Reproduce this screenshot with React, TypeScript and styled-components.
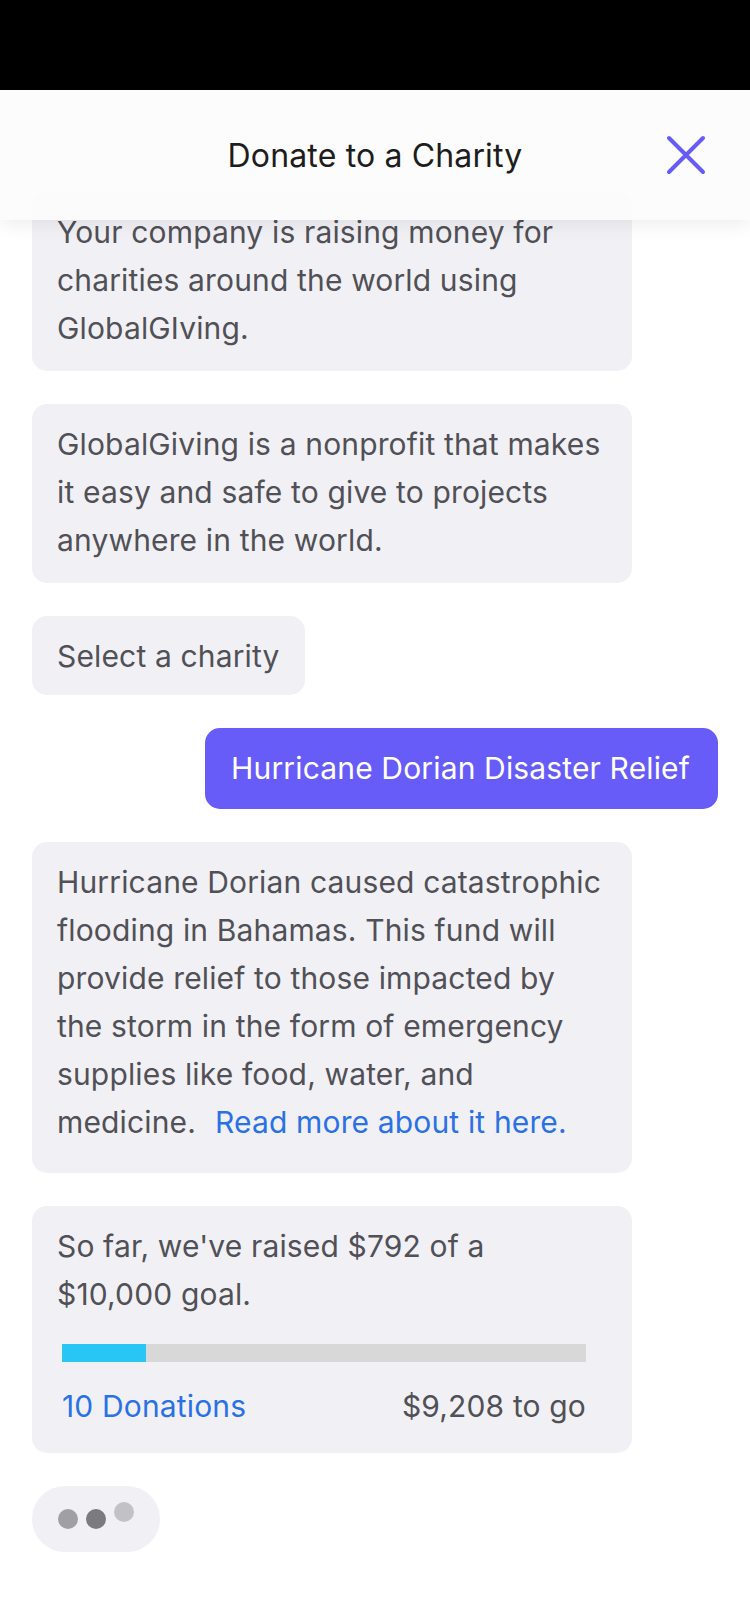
import React from "react";
import styled, { createGlobalStyle } from "styled-components";

const GlobalStyle = createGlobalStyle`
  html, body {
    margin: 0;
    padding: 0;
    background: #ffffff;
  }
  body {
    font-family: Inter, "Noto Sans", "Liberation Sans", sans-serif;
    -webkit-font-smoothing: antialiased;
  }
  * { box-sizing: border-box; }
`;

const Screen = styled.div`
  width: 750px;
  min-height: 1624px;
  background: #ffffff;
  display: flex;
  flex-direction: column;
  overflow: hidden;
`;

const StatusBar = styled.div`
  height: 90px;
  background: #000000;
  flex: none;
`;

const Body = styled.div`
  position: relative;
  flex: 1;
`;

const Header = styled.header`
  position: absolute;
  top: 0;
  left: 0;
  right: 0;
  height: 130px;
  z-index: 2;
  background: rgba(252, 252, 252, 0.93);
  box-shadow: 0 5px 18px rgba(0, 0, 0, 0.07);
  display: grid;
  grid-template-columns: 1fr auto 1fr;
  align-items: center;
`;

const Title = styled.h1`
  grid-column: 2;
  margin: 0;
  font-family: Inter, "Noto Sans", sans-serif;
  font-weight: 400;
  font-size: 32px;
  letter-spacing: 0.15px;
  color: #1d1d20;
`;

const CloseButton = styled.button`
  grid-column: 3;
  justify-self: end;
  margin-right: 44px;
  width: 40px;
  height: 40px;
  padding: 0;
  border: none;
  background: transparent;
  display: flex;
  align-items: center;
  justify-content: center;
  cursor: pointer;
`;

const Chat = styled.div`
  display: flex;
  flex-direction: column;
  gap: 33px;
  padding: 102px 32px 40px;
`;

const Bubble = styled.div<{ $pb?: number }>`
  align-self: flex-start;
  max-width: 600px;
  padding: 16px 25px ${(p) => p.$pb ?? 19}px;
  background: #f1f0f5;
  border-radius: 15px;
  font-size: 30px;
  line-height: 48px;
  letter-spacing: 0.15px;
  color: #505056;
`;

const WideBubble = styled(Bubble)`
  width: 600px;
`;

const UserBubble = styled.div`
  align-self: flex-end;
  padding: 16px 28px 17px 26px;
  background: #675cf8;
  border-radius: 15px;
  font-size: 30px;
  line-height: 48px;
  letter-spacing: 0.15px;
  color: #ffffff;
`;

const Link = styled.a`
  color: #2b71e6;
  text-decoration: none;
  margin-left: 19px;
`;

const Stats = styled.div`
  margin: 26px 21px 0 5px;
  display: flex;
  flex-direction: column;
  gap: 20px;
`;

const Track = styled.div`
  height: 18px;
  background: #d8d8d8;
  display: flex;
`;

const Fill = styled.div`
  height: 100%;
  background: #27c6f4;
`;

const StatsRow = styled.div`
  display: flex;
  justify-content: space-between;
  padding-bottom: 4px;
`;

const BlueText = styled.span`
  color: #2b71e6;
`;

const Typing = styled.div`
  align-self: flex-start;
  width: 128px;
  height: 66px;
  border-radius: 33px;
  background: #f1f0f5;
  display: flex;
  align-items: center;
  justify-content: center;
  gap: 8px;
`;

const Dot = styled.span<{ $color: string; $lift?: number }>`
  width: 20px;
  height: 20px;
  border-radius: 50%;
  background: ${(p) => p.$color};
  transform: translateY(${(p) => -(p.$lift ?? 0)}px);
`;

export default function App() {
  const progress = 16;
  return (
    <>
      <GlobalStyle />
      <Screen>
        <StatusBar />
        <Body>
          <Header>
            <Title>Donate to a Charity</Title>
            <CloseButton aria-label="Close">
              <svg width="40" height="40" viewBox="0 0 40 40">
                <path
                  d="M3 3 L37 37 M37 3 L3 37"
                  stroke="#675cf8"
                  strokeWidth="4"
                  strokeLinecap="round"
                  fill="none"
                />
              </svg>
            </CloseButton>
          </Header>
          <Chat>
            <WideBubble>
              Your company is raising money for charities around the world using
              GlobalGIving.
            </WideBubble>
            <WideBubble>
              GlobalGiving is a nonprofit that makes it easy and safe to give to
              projects anywhere in the world.
            </WideBubble>
            <Bubble $pb={15}>Select a charity</Bubble>
            <UserBubble>Hurricane Dorian Disaster Relief</UserBubble>
            <WideBubble $pb={27}>
              Hurricane Dorian caused catastrophic flooding in Bahamas. This fund
              will provide relief to those impacted by the storm in the form of
              emergency supplies like food, water, and medicine.
              <Link href="#">Read more about it here.</Link>
            </WideBubble>
            <WideBubble $pb={19}>
              So far, we've raised $792 of a $10,000 goal.
              <Stats>
                <Track>
                  <Fill style={{ width: `${progress}%` }} />
                </Track>
                <StatsRow>
                  <BlueText>10 Donations</BlueText>
                  <span>$9,208 to go</span>
                </StatsRow>
              </Stats>
            </WideBubble>
            <Typing>
              <Dot $color="#a0a0a3" />
              <Dot $color="#7b7b7e" />
              <Dot $color="#c2c2c4" $lift={7} />
            </Typing>
          </Chat>
        </Body>
      </Screen>
    </>
  );
}
